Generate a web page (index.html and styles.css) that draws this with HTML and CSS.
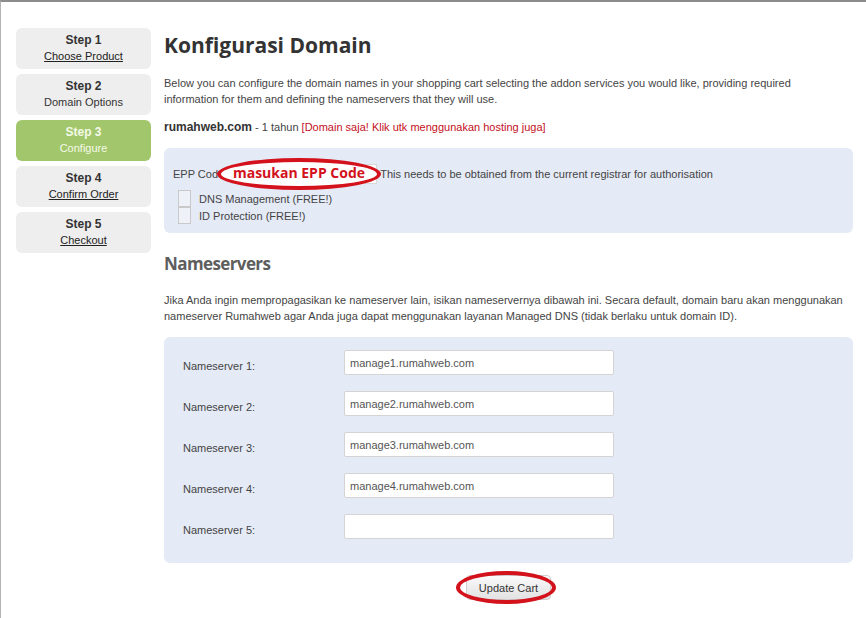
FILE: index.html
```html
<!DOCTYPE html>
<html lang="id">
<head>
    <meta charset="UTF-8">
    <title>Konfigurasi Domain</title>
    <link rel="stylesheet" href="styles.css">
</head>
<body>
    <div class="page">
        <ul class="steps">
            <li class="step"><strong>Step 1</strong><a href="#">Choose Product</a></li>
            <li class="step"><strong>Step 2</strong><span>Domain Options</span></li>
            <li class="step active"><strong>Step 3</strong><span>Configure</span></li>
            <li class="step"><strong>Step 4</strong><a href="#">Confirm Order</a></li>
            <li class="step"><strong>Step 5</strong><a href="#">Checkout</a></li>
        </ul>

        <div class="main">
            <h1>Konfigurasi Domain</h1>
            <p class="intro">Below you can configure the domain names in your shopping cart selecting the addon services you would like, providing required information for them and defining the nameservers that they will use.</p>

            <p class="domain"><b>rumahweb.com</b> - 1 tahun <a href="#" class="hosting">[Domain saja! Klik utk menggunakan hosting juga]</a></p>

            <div class="box addons">
                <div class="epp">
                    EPP Code: <input type="text" class="epp-input">This needs to be obtained from the current registrar for authorisation
                    <div class="mark mark-epp">masukan EPP Code</div>
                </div>
                <label class="addon"><span class="check"></span>DNS Management (FREE!)</label>
                <label class="addon"><span class="check"></span>ID Protection (FREE!)</label>
            </div>

            <h2>Nameservers</h2>
            <p class="intro ns-intro">Jika Anda ingin mempropagasikan ke nameserver lain, isikan nameservernya dibawah ini. Secara default, domain baru akan menggunakan nameserver Rumahweb agar Anda juga dapat menggunakan layanan Managed DNS (tidak berlaku untuk domain ID).</p>

            <div class="box nameservers">
                <div class="ns-row"><label>Nameserver 1:</label><input type="text" value="manage1.rumahweb.com"></div>
                <div class="ns-row"><label>Nameserver 2:</label><input type="text" value="manage2.rumahweb.com"></div>
                <div class="ns-row"><label>Nameserver 3:</label><input type="text" value="manage3.rumahweb.com"></div>
                <div class="ns-row"><label>Nameserver 4:</label><input type="text" value="manage4.rumahweb.com"></div>
                <div class="ns-row"><label>Nameserver 5:</label><input type="text" value=""></div>
            </div>

            <div class="actions">
                <span class="btn-wrap">
                    <input type="submit" class="btn" value="Update Cart">
                    <span class="mark mark-btn"></span>
                </span>
            </div>
        </div>
    </div>
</body>
</html>
```

FILE: styles.css
```css
body {
    margin: 0;
    font-family: "Liberation Sans", Arial, sans-serif;
    font-size: 11px;
    color: #444;
    background: #fff;
}

.page {
    display: flex;
    gap: 13px;
    min-height: 616px;
    padding: 26px 0 0 15px;
    border-top: 2px solid #8c8c8c;
    border-left: 1px solid #b4b4b4;
}

/* steps sidebar */
.steps {
    list-style: none;
    margin: 0;
    padding: 0;
    width: 135px;
    display: flex;
    flex-direction: column;
    gap: 5px;
}

.step {
    height: 41px;
    box-sizing: border-box;
    padding-top: 4px;
    background: #eeeeee;
    border-radius: 6px;
    text-align: center;
    line-height: 16px;
    color: #333;
}

.step strong {
    display: block;
    font-size: 12px;
}

.step a {
    color: #222;
    text-decoration: underline;
}

.step.active {
    background: #a2c66b;
    color: #f4fae8;
}

/* main column */
.main {
    width: 689px;
}

h1 {
    margin: 0;
    padding-top: 2px;
    font-family: "Open Sans", sans-serif;
    font-size: 21px;
    line-height: 30px;
    font-weight: bold;
    color: #333;
}

.intro {
    margin: 15px 0 0;
    max-width: 681px;
    line-height: 16px;
}

.domain {
    margin: 12px 0 0;
    line-height: 16px;
}

.domain b {
    font-size: 12px;
    color: #333;
}

.hosting {
    color: #c4101c;
    text-decoration: none;
}

.box {
    background: #e4eaf6;
    border-radius: 6px;
    margin-top: 13px;
}

.addons {
    padding: 16px 9px 9px;
}

.epp {
    position: relative;
    height: 20px;
    line-height: 20px;
    margin-bottom: 6px;
}

.epp-input {
    width: 146px;
    height: 20px;
    box-sizing: border-box;
    border: 1px solid #d8d8d8;
    background: #fff;
    vertical-align: top;
    margin: 0 3px 0 1px;
}

.addon {
    display: flex;
    align-items: center;
    height: 17px;
    padding-left: 5px;
}

.check {
    width: 11px;
    height: 15px;
    border: 1px solid #c9c9c9;
    background: #eef1f8;
    margin-right: 8px;
}

/* red annotation ovals */
.mark {
    position: absolute;
    border: 4px solid #d3121c;
    border-radius: 50%;
    box-sizing: border-box;
}

.mark-epp {
    left: 44px;
    top: -6px;
    width: 164px;
    height: 32px;
    font-family: "Open Sans", sans-serif;
    font-size: 14px;
    font-weight: bold;
    color: #d3121c;
    line-height: 22px;
    text-align: center;
    background: #fff;
}

h2 {
    margin: 19px 0 0;
    font-family: "Open Sans", sans-serif;
    font-size: 17px;
    line-height: 24px;
    font-weight: bold;
    color: #5e5e5e;
    letter-spacing: -0.6px;
}

.ns-intro {
    margin-top: 16px;
}

.nameservers {
    padding: 13px 0 24px 19px;
    display: flex;
    flex-direction: column;
    gap: 16px;
}

.ns-row {
    display: flex;
    height: 25px;
}

.ns-row label {
    width: 161px;
    padding-top: 8px;
    line-height: 16px;
}

.ns-row input {
    width: 270px;
    height: 25px;
    box-sizing: border-box;
    border: 1px solid #d4d4d4;
    border-radius: 2px;
    background: #fff;
    padding: 0 5px;
    font-family: "Liberation Sans", Arial, sans-serif;
    font-size: 11px;
    color: #555;
}

.actions {
    text-align: center;
    margin-top: 12px;
}

.btn-wrap {
    position: relative;
    display: inline-block;
}

.btn {
    height: 25px;
    padding: 0 12px;
    font-family: "Liberation Sans", Arial, sans-serif;
    font-size: 11px;
    color: #333;
    border: 1px solid #cfcfcf;
    border-radius: 4px;
    background: linear-gradient(#fafafa, #e2e2e2);
}

.mark-btn {
    left: -10px;
    top: -4px;
    width: 100px;
    height: 33px;
}
```
